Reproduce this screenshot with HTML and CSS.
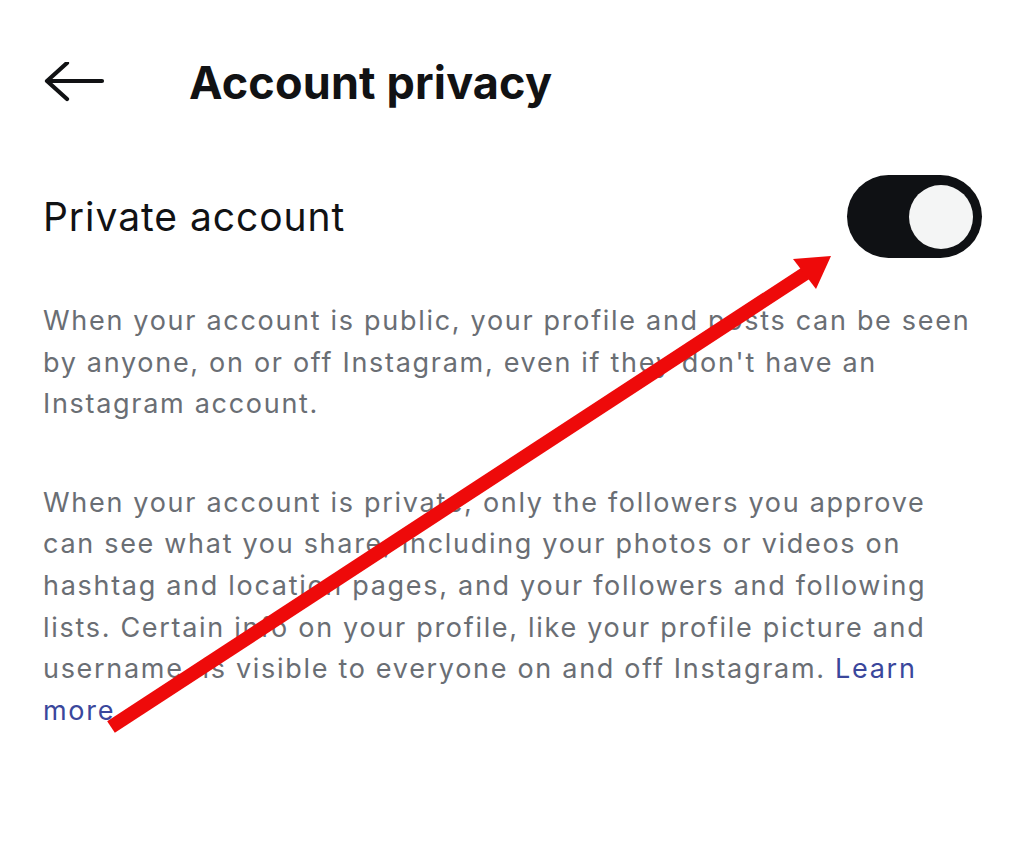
FILE: index.html
```html
<!DOCTYPE html>
<html lang="en">
<head>
<meta charset="utf-8">
<title>Account privacy</title>
<link rel="stylesheet" href="styles.css">
</head>
<body>
<div class="page">
  <header class="header">
    <svg class="back" width="62" height="42" viewBox="0 0 62 42" aria-hidden="true">
      <path d="M4 19 H59 M24 1 L4 19 L24 37" fill="none" stroke="#111214" stroke-width="4.2" stroke-linecap="round" stroke-linejoin="round"/>
    </svg>
    <h1 class="title">Account privacy</h1>
  </header>
  <div class="row">
    <span class="label">Private account</span>
    <div class="toggle"><div class="knob"></div></div>
  </div>
  <p class="desc">When your account is public, your profile and posts can be seen<br>by anyone, on or off Instagram, even if they don't have an<br>Instagram account.</p>
  <p class="desc second">When your account is private, only the followers you approve<br>can see what you share, including your photos or videos on<br>hashtag and location pages, and your followers and following<br>lists. Certain info on your profile, like your profile picture and<br>username, is visible to everyone on and off Instagram. <a class="link" href="#">Learn<br>more</a></p>
</div>
<svg class="annot" width="1024" height="849" viewBox="0 0 1024 849" aria-hidden="true">
  <line x1="111" y1="727" x2="806" y2="273" stroke="#ee0a0a" stroke-width="14" stroke-linecap="butt"/>
  <polygon points="831,256 793,259 816,289" fill="#ee0a0a"/>
</svg>
</body>
</html>
```
FILE: styles.css
```css
html, body {
  margin: 0;
  padding: 0;
  background: #ffffff;
}
body {
  font-family: "Inter", "Roboto", "Liberation Sans", sans-serif;
  width: 1024px;
  height: 849px;
  overflow: hidden;
  position: relative;
}
.page {
  padding: 54px 0 0 43px;
}
.header {
  display: flex;
  align-items: center;
  height: 56px;
}
.back {
  display: block;
  margin-top: 2px;
}
.title {
  margin: 0 0 0 84px;
  font-size: 45px;
  font-weight: 700;
  color: #111214;
  letter-spacing: 0.15px;
}
.row {
  display: flex;
  align-items: center;
  justify-content: space-between;
  margin-top: 65px;
  width: 939px;
}
.label {
  font-size: 39px;
  color: #111214;
  font-weight: 400;
  letter-spacing: 0.95px;
}
.toggle {
  width: 135px;
  height: 83px;
  border-radius: 42px;
  background: #0f1114;
  display: flex;
  align-items: center;
  justify-content: flex-end;
  padding-right: 9px;
  box-sizing: border-box;
}
.knob {
  width: 64px;
  height: 64px;
  border-radius: 50%;
  background: #f4f5f5;
}
.desc {
  margin: 42px 0 0 0;
  font-size: 27px;
  line-height: 41.6px;
  letter-spacing: 1.7px;
  color: #6a6e74;
}
.desc.second {
  margin-top: 57px;
}
.link {
  color: #3a479c;
  text-decoration: none;
}
.annot {
  position: absolute;
  left: 0;
  top: 0;
  pointer-events: none;
}
```
